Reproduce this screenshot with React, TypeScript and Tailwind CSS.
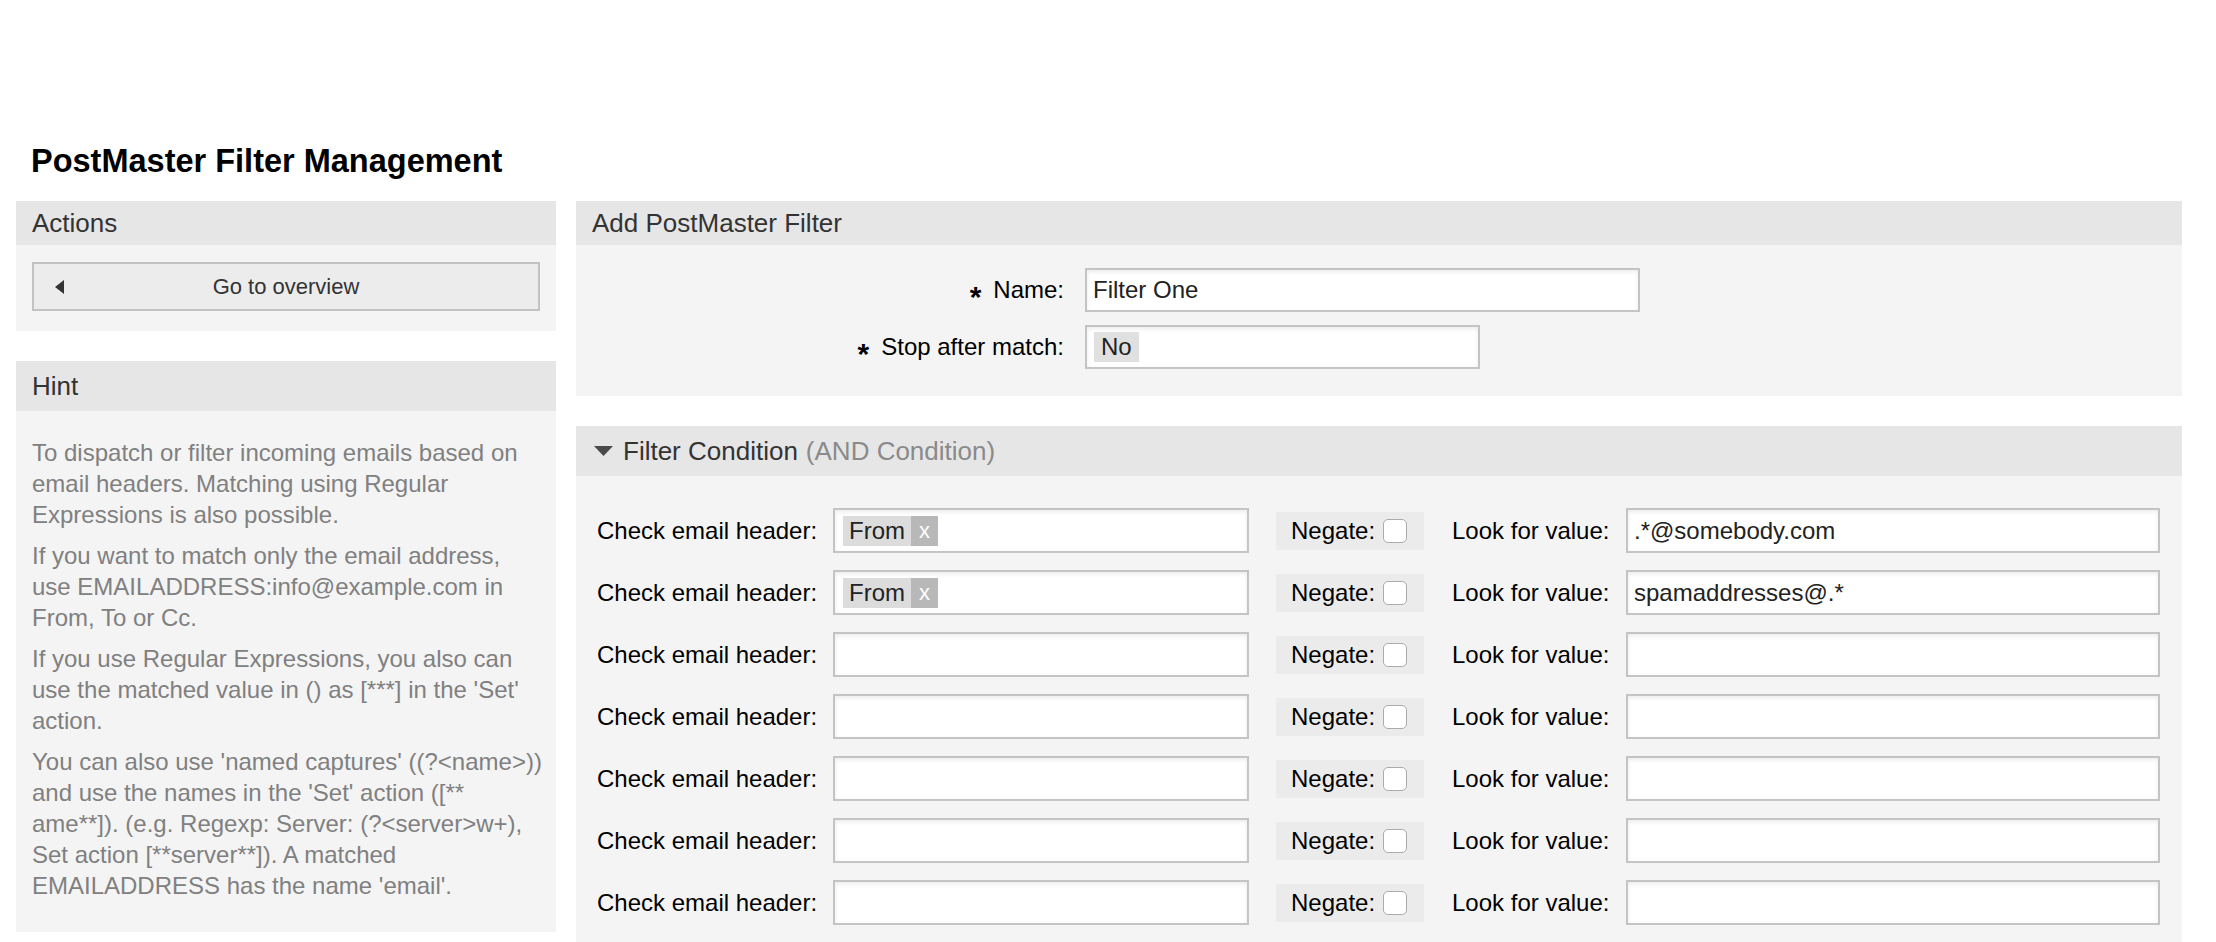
const rows = [
    { header: 'From', value: '.*@somebody.com' },
    { header: 'From', value: 'spamaddresses@.*' },
    { header: '', value: '' },
    { header: '', value: '' },
    { header: '', value: '' },
    { header: '', value: '' },
    { header: '', value: '' },
    { header: '', value: '' },
];

const hint = [
    ['To dispatch or filter incoming emails based on', 'email headers. Matching using Regular', 'Expressions is also possible.'],
    ['If you want to match only the email address,', 'use EMAILADDRESS:info@example.com in', 'From, To or Cc.'],
    ['If you use Regular Expressions, you also can', "use the matched value in () as [***] in the 'Set'", 'action.'],
    [
        "You can also use 'named captures' ((?<name>))",
        "and use the names in the 'Set' action ([**",
        'ame**]). (e.g. Regexp: Server: (?<server>w+),',
        'Set action [**server**]). A matched',
        "EMAILADDRESS has the name 'email'.",
    ],
];

function Required({ label }: { label: string }) {
    return (
        <span className="flex items-baseline text-[24px] text-black">
            <span className="mr-[12px] text-[30px] font-bold leading-none translate-y-[9px]">*</span>
            {label}
        </span>
    );
}

function TextBox({ children, className }: { children?: React.ReactNode; className: string }) {
    return (
        <div className={`flex items-center bg-white border-2 border-[#c4c4c4] shadow-[inset_0_2px_4px_rgba(0,0,0,0.08)] ${className}`}>
            {children}
        </div>
    );
}

export default function App() {
    return (
        <div className="h-[942px] overflow-hidden bg-white px-4 pt-[145px] font-['Liberation_Sans',Arial,sans-serif]">
            <h1 className="pl-[15px] text-[32.5px] leading-[32px] font-bold text-black">PostMaster Filter Management</h1>

            <div className="mt-[24px] flex gap-[20px] items-start">
                {/* sidebar */}
                <div className="w-[540px] flex flex-col gap-[30px]">
                    <div>
                        <div className="h-[44px] flex items-center px-4 bg-[#e6e6e6] text-[26px] text-[#333]">Actions</div>
                        <div className="bg-[#f4f4f4] px-4 pt-[17px] pb-[20px]">
                            <button className="relative w-full h-[49px] flex items-center justify-center bg-[#ececec] border-2 border-[#c2c2c2] text-[22px] text-[#333]">
                                <svg className="absolute left-[21px] top-[16px]" width="9" height="14" viewBox="0 0 9 14">
                                    <polygon points="9,0 0,7 9,14" fill="#333" />
                                </svg>
                                Go to overview
                            </button>
                        </div>
                    </div>

                    <div>
                        <div className="h-[50px] flex items-center px-4 bg-[#e6e6e6] text-[26px] text-[#333]">Hint</div>
                        <div className="bg-[#f4f4f4] pl-4 pt-[26px] pb-[31px] text-[24px] leading-[31px] text-[#808080]">
                            {hint.map((para, i) => (
                                <p key={i} className="mb-[10px] last:mb-0 whitespace-nowrap">
                                    {para.map((line, j) => (
                                        <span key={j} className="block">{line}</span>
                                    ))}
                                </p>
                            ))}
                        </div>
                    </div>
                </div>

                {/* main */}
                <div className="w-[1606px] flex flex-col gap-[30px]">
                    <div>
                        <div className="h-[44px] flex items-center px-4 bg-[#e6e6e6] text-[26px] text-[#333]">Add PostMaster Filter</div>
                        <div className="bg-[#f4f4f4] pt-[23px] pb-[27px] flex flex-col gap-[13px]">
                            <div className="flex items-center">
                                <div className="w-[488px] flex justify-end"><Required label="Name:" /></div>
                                <TextBox className="ml-[21px] w-[555px] h-[44px] pl-[6px] text-[24px] text-[#222]">Filter One</TextBox>
                            </div>
                            <div className="flex items-center">
                                <div className="w-[488px] flex justify-end"><Required label="Stop after match:" /></div>
                                <TextBox className="ml-[21px] w-[395px] h-[44px] pl-[7px]">
                                    <span className="h-[30px] px-[7px] flex items-center bg-[#e0e0e0] text-[24px] text-[#222]">No</span>
                                </TextBox>
                            </div>
                        </div>
                    </div>

                    <div>
                        <div className="h-[50px] flex items-center pl-[18px] bg-[#e6e6e6] text-[26px]">
                            <svg width="19" height="10" viewBox="0 0 19 10" className="mr-[10px]">
                                <polygon points="0,0 19,0 9.5,10" fill="#4a4a4a" />
                            </svg>
                            <span className="text-[#333]">Filter Condition</span>
                            <span className="ml-[8px] text-[#8a8a8a]">(AND Condition)</span>
                        </div>
                        <div className="bg-[#f4f4f4] pt-[32px] pl-[21px] pb-6 flex flex-col gap-[17px]">
                            {rows.map((row, i) => (
                                <div key={i} className="flex items-center h-[45px] text-[24px] text-black">
                                    <span className="w-[236px]">Check email header:</span>
                                    <TextBox className="w-[416px] h-[45px] pl-[8px]">
                                        {row.header && (
                                            <span className="flex h-[30px] text-[24px]">
                                                <span className="px-[6px] flex items-center bg-[#dcdcdc] text-[#222]">{row.header}</span>
                                                <span className="w-[27px] flex items-center justify-center bg-[#b8b8b8] text-white text-[22px]">x</span>
                                            </span>
                                        )}
                                    </TextBox>
                                    <div className="ml-[27px] w-[148px] h-[38px] flex items-center pl-[15px] bg-[#ebebeb]">
                                        <span>Negate:</span>
                                        <span className="ml-[8px] w-[24px] h-[24px] rounded-[5px] border-[1.5px] border-[#ababab] bg-white" />
                                    </div>
                                    <span className="ml-[28px] w-[174px]">Look for value:</span>
                                    <TextBox className="w-[534px] h-[45px] pl-[6px] text-[#222]">{row.value}</TextBox>
                                </div>
                            ))}
                        </div>
                    </div>
                </div>
            </div>
        </div>
    );
}
